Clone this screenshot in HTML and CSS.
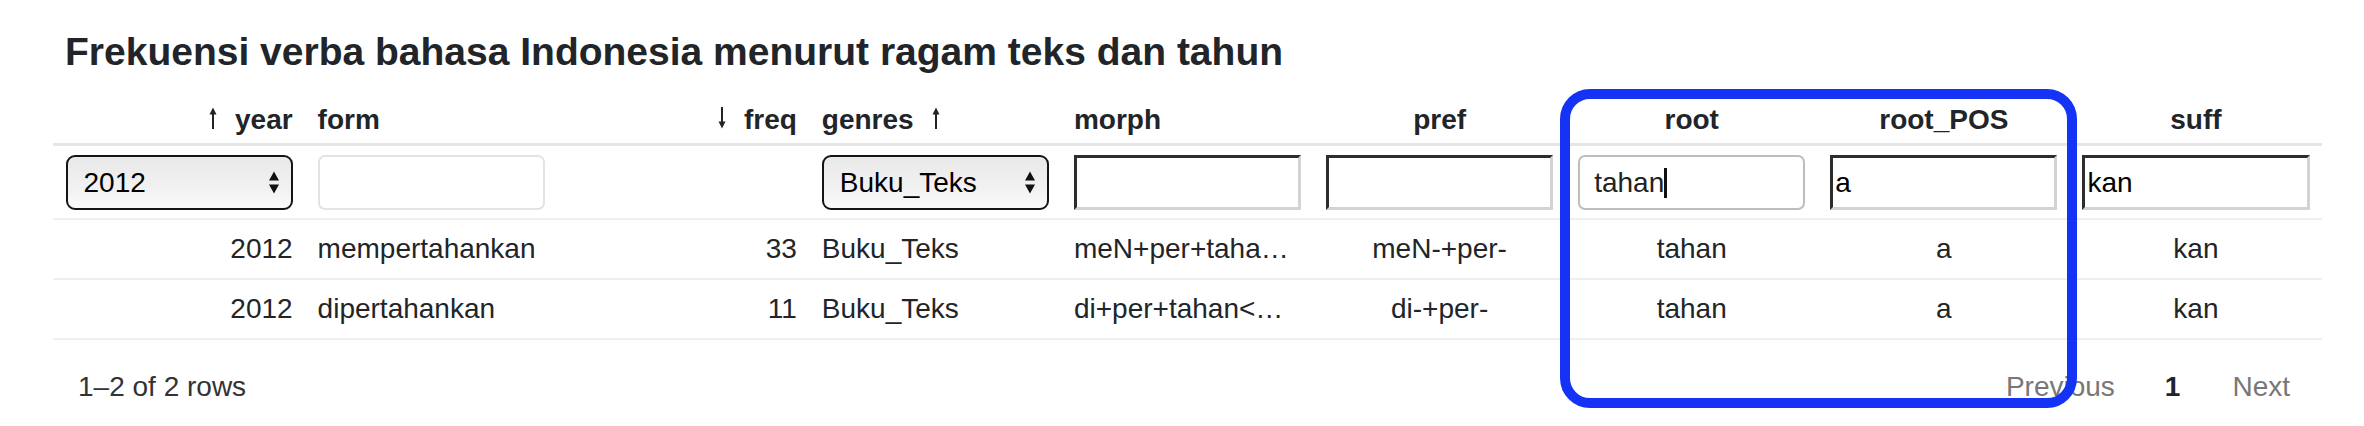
FILE: index.html
```html
<!DOCTYPE html>
<html lang="id">
<head>
<meta charset="utf-8">
<title>Frekuensi verba</title>
<link rel="stylesheet" href="styles.css">
</head>
<body>
<div class="page">
  <h1 class="title">Frekuensi verba bahasa Indonesia menurut ragam teks dan tahun</h1>
  <div class="table">
    <div class="row head">
      <div class="cell right"><svg class="sort" viewBox="0 0 10 22" width="10" height="22"><path d="M5 5 V22" stroke="#212529" stroke-width="2"/><path d="M1.5 7.5 L5 0.5 L8.5 7.5 Z" fill="#212529"/></svg>year</div>
      <div class="cell">form</div>
      <div class="cell right"><svg class="sort" viewBox="0 0 10 22" width="10" height="22"><path d="M5 0 V17" stroke="#212529" stroke-width="2"/><path d="M1.5 14.5 L5 21.5 L8.5 14.5 Z" fill="#212529"/></svg>freq</div>
      <div class="cell">genres<svg class="sort after" viewBox="0 0 10 22" width="10" height="22"><path d="M5 5 V22" stroke="#212529" stroke-width="2"/><path d="M1.5 7.5 L5 0.5 L8.5 7.5 Z" fill="#212529"/></svg></div>
      <div class="cell">morph</div>
      <div class="cell center">pref</div>
      <div class="cell center">root</div>
      <div class="cell center">root_POS</div>
      <div class="cell center">suff</div>
    </div>
    <div class="row filters">
      <div class="cell"><div class="select" role="combobox"><span>2012</span><svg viewBox="0 0 12 23" width="12" height="23"><path d="M1 9.5 L6 0.5 L11 9.5 Z M1 13.5 L11 13.5 L6 22.5 Z" fill="#111"/></svg></div></div>
      <div class="cell"><input class="inp soft" type="text" value=""></div>
      <div class="cell"></div>
      <div class="cell"><div class="select" role="combobox"><span>Buku_Teks</span><svg viewBox="0 0 12 23" width="12" height="23"><path d="M1 9.5 L6 0.5 L11 9.5 Z M1 13.5 L11 13.5 L6 22.5 Z" fill="#111"/></svg></div></div>
      <div class="cell"><input class="inp inset" type="text" value=""></div>
      <div class="cell"><input class="inp inset" type="text" value=""></div>
      <div class="cell"><div class="field"><input class="inp focus" type="text" value="tahan"><span class="caret"></span></div></div>
      <div class="cell"><input class="inp inset" type="text" value="a"></div>
      <div class="cell"><input class="inp inset" type="text" value="kan"></div>
    </div>
    <div class="row data">
      <div class="cell right">2012</div>
      <div class="cell">mempertahankan</div>
      <div class="cell right">33</div>
      <div class="cell">Buku_Teks</div>
      <div class="cell" title="meN+per+tahan&lt;a&gt;+kan">meN+per+taha…</div>
      <div class="cell center">meN-+per-</div>
      <div class="cell center">tahan</div>
      <div class="cell center">a</div>
      <div class="cell center">kan</div>
    </div>
    <div class="row data">
      <div class="cell right">2012</div>
      <div class="cell">dipertahankan</div>
      <div class="cell right">11</div>
      <div class="cell">Buku_Teks</div>
      <div class="cell" title="di+per+tahan&lt;a&gt;+kan">di+per+tahan&lt;…</div>
      <div class="cell center">di-+per-</div>
      <div class="cell center">tahan</div>
      <div class="cell center">a</div>
      <div class="cell center">kan</div>
    </div>
  </div>
  <div class="footer">
    <span class="info">1–2 of 2 rows</span>
    <div class="pager">
      <span class="pg-btn">Previous</span>
      <span class="pg-num">1</span>
      <span class="pg-btn">Next</span>
    </div>
  </div>
  <div class="highlight"></div>
</div>
</body>
</html>
```

FILE: styles.css
```css
html, body {
  margin: 0;
  padding: 0;
  background: #ffffff;
}

body {
  font-family: "Liberation Sans", Arial, Helvetica, sans-serif;
  color: #212529;
}

.page {
  position: relative;
  width: 2364px;
  height: 426px;
  box-sizing: border-box;
  padding: 28px 0 0 53px;
  overflow: hidden;
}

.title {
  margin: 0 0 13px 12px;
  font-size: 39px;
  line-height: 48px;
  font-weight: 700;
  color: #212529;
}

.table {
  width: 2269px;
  font-size: 28px;
  line-height: 32px;
}

.row {
  display: grid;
  grid-template-columns: repeat(9, minmax(0, 1fr));
}

.cell {
  padding: 0 12.5px;
  overflow: hidden;
  white-space: nowrap;
  text-overflow: ellipsis;
  text-align: left;
}

.cell.right {
  text-align: right;
}

.cell.center {
  text-align: center;
}

.head {
  border-bottom: 3px solid #e6e6e6;
}

.head .cell {
  padding-top: 15px;
  padding-bottom: 7px;
  font-weight: 700;
}

.sort {
  display: inline-block;
  vertical-align: baseline;
  margin-right: 17px;
}

.sort.after {
  margin-right: 0;
  margin-left: 17px;
}

.filters {
  border-bottom: 2px solid #efefef;
}

.filters .cell {
  padding-top: 9px;
  padding-bottom: 8px;
  overflow: visible;
}

.data {
  border-bottom: 2px solid #efefef;
}

.data .cell {
  padding-top: 13px;
  padding-bottom: 13px;
}

.select {
  display: flex;
  align-items: center;
  justify-content: space-between;
  box-sizing: border-box;
  height: 55px;
  width: 100%;
  padding: 0 11px 0 16px;
  border: 2px solid #141414;
  border-radius: 9px;
  background: linear-gradient(#e9e9e9, #f1f1f1 60%, #fbfbfb);
  color: #000;
  font-size: 28px;
  line-height: 32px;
}

.inp {
  display: block;
  box-sizing: border-box;
  width: 100%;
  height: 55px;
  margin: 0;
  font-family: "Liberation Sans", Arial, Helvetica, sans-serif;
  font-size: 28px;
  color: #000;
  background: #fff;
  outline: none;
}

.inp.soft {
  border: 2px solid #e3e3e3;
  border-radius: 7px;
  padding: 0 14px;
}

.inp.focus {
  border: 2px solid #bdbdbd;
  border-radius: 7px;
  padding: 0 14px;
  color: #222;
}

.inp.inset {
  border-style: solid;
  border-width: 3px;
  border-color: #2d2d2d #d3d3d3 #d3d3d3 #2d2d2d;
  border-radius: 0;
  padding: 0 2px;
}

.field {
  position: relative;
}

.caret {
  position: absolute;
  left: 86px;
  top: 13px;
  width: 3px;
  height: 30px;
  background: #111;
}

.footer {
  width: 2269px;
  box-sizing: border-box;
  display: flex;
  justify-content: space-between;
  align-items: center;
  padding: 31px 32px 0 25px;
  font-size: 28px;
  line-height: 32px;
}

.info {
  color: #333;
}

.pager {
  display: flex;
  align-items: center;
}

.pg-btn {
  color: #777;
}

.pg-num {
  margin: 0 52px 0 50px;
  font-weight: 700;
  color: #212529;
}

.highlight {
  position: absolute;
  left: 1560px;
  top: 89px;
  width: 517px;
  height: 319px;
  box-sizing: border-box;
  border: 10px solid #1533f5;
  border-radius: 30px;
}
```
